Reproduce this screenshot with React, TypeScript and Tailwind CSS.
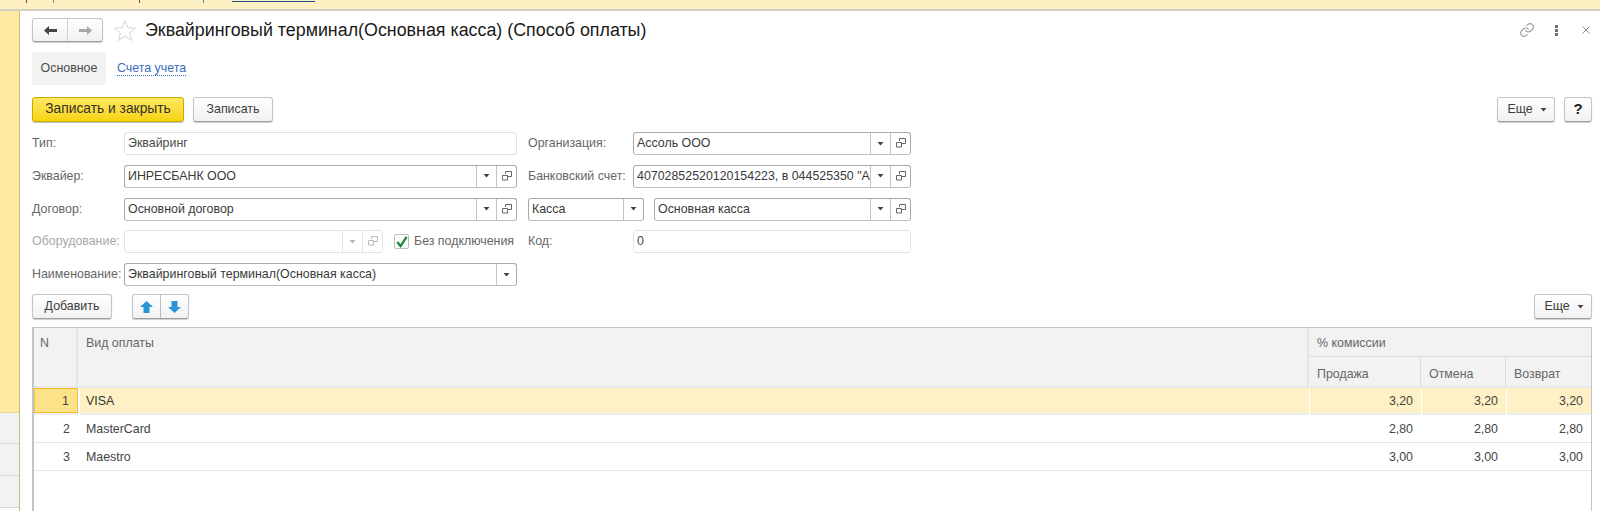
import React from 'react';

const Caret = ({ light = false }: { light?: boolean }) => (
  <svg width="7" height="4" viewBox="0 0 7 4" className="block">
    <path d="M0.5 0H6.5L3.5 3.5Z" fill={light ? '#b5b5b5' : '#444444'} />
  </svg>
);

const OpenIcon = ({ light = false }: { light?: boolean }) => (
  <svg width="10" height="10" viewBox="0 0 10 10" className="block -mt-px" fill="none" stroke={light ? '#b8b8b8' : '#666666'} strokeWidth="1">
    <path d="M3.5 3V0.5H9.5V5.5H6" />
    <path d="M0.5 4.5H5.5V9H0.5Z" />
  </svg>
);

const Btn = ({ children, className = '' }: { children: React.ReactNode; className?: string }) => (
  <div className={`h-6 flex items-center justify-center rounded-[3px] border border-[#c4c4c4] border-b-[#9f9f9f] bg-gradient-to-b from-white to-[#f1f1f1] shadow-[0_1px_1px_rgba(0,0,0,0.2)] text-[12.4px] text-[#3c3c3c] ${className}`}>
    {children}
  </div>
);

const Field = ({
  text = '',
  className = '',
  caret = false,
  open = false,
  disabled = false,
}: {
  text?: string;
  className?: string;
  caret?: boolean;
  open?: boolean;
  disabled?: boolean;
}) => (
  <div
    className={`h-[23px] flex items-stretch rounded-[3px] border text-[12.4px] ${
      disabled || !(caret || open)
        ? 'border-[#e2e2e2] text-[#4a4a4a]'
        : 'border-[#a9a9a9] border-b-[#bdbdbd] text-[#3a3a3a]'
    } ${className}`}
  >
    <div className="flex-1 min-w-0 pl-[3px] leading-[21px] whitespace-nowrap overflow-hidden">{text}</div>
    {caret && (
      <div className={`w-5 flex items-center justify-center border-l ${disabled ? 'border-[#e2e2e2]' : 'border-[#c4c4c4]'}`}>
        <Caret light={disabled} />
      </div>
    )}
    {open && (
      <div className={`w-5 flex items-center justify-center border-l ${disabled ? 'border-[#e2e2e2]' : 'border-[#c4c4c4]'}`}>
        <OpenIcon light={disabled} />
      </div>
    )}
  </div>
);

const Label = ({ children, className = '' }: { children: React.ReactNode; className?: string }) => (
  <div className={`text-[12.4px] leading-[23px] text-[#666666] whitespace-nowrap ${className}`}>{children}</div>
);

const rows = [
  { n: '1', name: 'VISA', sale: '3,20', cancel: '3,20', ret: '3,20' },
  { n: '2', name: 'MasterCard', sale: '2,80', cancel: '2,80', ret: '2,80' },
  { n: '3', name: 'Maestro', sale: '3,00', cancel: '3,00', ret: '3,00' },
];

const App: React.FC = () => {
  return (
    <div className="w-[1600px] h-[511px] overflow-hidden bg-white flex flex-col font-['Liberation_Sans',Arial,sans-serif]">
      {/* top strip */}
      <div className="h-[11px] shrink-0 bg-[#fdf0c3] border-b-2 border-[#d2cfc4] flex items-start">
        <span className="ml-[26px] w-px h-[3px] bg-[#8c3a3a]" />
        <span className="ml-[26px] w-px h-[3px] bg-[#6f8fa8]" />
        <span className="ml-[85px] w-px h-[3px] bg-[#8c3a3a]" />
        <span className="ml-[63px] w-px h-[3px] bg-[#3d8fb0]" />
        <span className="ml-[28px] w-[83px] h-px mt-px bg-[#1d4f8c]" />
      </div>

      <div className="flex flex-1 min-h-0">
        {/* left panel */}
        <div className="w-5 shrink-0 border-r border-[#c9bd7a] flex flex-col">
          <div className="h-[402px] bg-[#fdeaa0] border-b border-[#e6d98f]" />
          <div className="h-[31px] bg-[#f2f2f2] border-b border-[#d6d6d6]" />
          <div className="h-[32px] bg-[#f2f2f2] border-b border-[#d6d6d6]" />
          <div className="h-[32px] bg-[#f2f2f2] border-b border-[#d6d6d6]" />
        </div>

        <div className="flex-1 min-w-0 pl-3 pr-2 flex flex-col">
          {/* title row */}
          <div className="mt-[7px] h-6 flex items-center">
            <div className="w-[71px] h-6 flex rounded-[3px] border border-[#c4c4c4] border-b-[#9f9f9f] bg-gradient-to-b from-white to-[#f1f1f1] shadow-[0_1px_1px_rgba(0,0,0,0.2)]">
              <div className="w-[35px] flex items-center justify-center border-r border-[#d0d0d0]">
                <svg width="13" height="9" viewBox="0 0 13 9"><path d="M0 4.5L5 0V3H13V6H5V9Z" fill="#444444" /></svg>
              </div>
              <div className="flex-1 flex items-center justify-center">
                <svg width="13" height="9" viewBox="0 0 13 9"><path d="M13 4.5L8 0V3H0V6H8V9Z" fill="#a8a8a8" /></svg>
              </div>
            </div>
            <svg width="24" height="23" viewBox="0 0 24 23" className="ml-[10px]">
              <path d="M12 1.5L14.8 8.8L22.5 9.2L16.5 14L18.6 21.5L12 17.2L5.4 21.5L7.5 14L1.5 9.2L9.2 8.8Z" fill="#ffffff" stroke="#d4d4d4" strokeWidth="1" />
            </svg>
            <div className="ml-2 text-[17.85px] leading-6 text-[#1a1a1a] whitespace-nowrap">
              Эквайринговый терминал(Основная касса) (Способ оплаты)
            </div>
            <div className="ml-auto flex items-center pr-[5px]">
              <svg width="16" height="16" viewBox="0 0 24 24" fill="none" stroke="#9a9a9a" strokeWidth="1.7" strokeLinecap="round">
                <path d="M10 13a5 5 0 0 0 7.5.5l3-3a5 5 0 0 0-7-7l-1.7 1.7" />
                <path d="M14 11a5 5 0 0 0-7.5-.5l-3 3a5 5 0 0 0 7 7l1.7-1.7" />
              </svg>
              <div className="ml-[20px] flex flex-col gap-[1px]">
                <span className="w-[3px] h-[3px] bg-[#707070]" />
                <span className="w-[3px] h-[3px] bg-[#707070]" />
                <span className="w-[3px] h-[3px] bg-[#707070]" />
              </div>
              <svg width="8" height="8" viewBox="0 0 8 8" className="ml-[24px] mr-[-3px]" stroke="#8f8f8f" strokeWidth="1">
                <path d="M0.5 0.5L7.5 7.5M7.5 0.5L0.5 7.5" />
              </svg>
            </div>
          </div>

          {/* tabs */}
          <div className="mt-[10px] flex items-center text-[12.4px]">
            <div className="w-[74px] h-[33px] bg-[#f2f2f2] rounded-[3px] flex items-center justify-center text-[#4a4a4a]">Основное</div>
            <div className="ml-[11px] text-[#3a6cbd] border-b border-dotted border-[#3a6cbd] leading-[14px]">Счета учета</div>
          </div>

          {/* command bar */}
          <div className="mt-[12px] flex items-center">
            <div className="w-[152px] h-[25px] flex items-center justify-center rounded-[3px] border border-[#c9a900] bg-gradient-to-b from-[#ffe95c] to-[#f7d300] shadow-[0_1px_1px_rgba(0,0,0,0.25)] text-[13.8px] text-[#33322a]">
              Записать и закрыть
            </div>
            <Btn className="ml-[9px] w-20 h-[25px]">Записать</Btn>
            <Btn className="ml-auto w-[58px] h-[25px] gap-[7px] pl-[2px]">
              Еще <Caret />
            </Btn>
            <Btn className="ml-[9px] w-7 h-[25px] !text-[15px] !text-[#222222] font-bold">?</Btn>
          </div>

          {/* form */}
          <div className="mt-[10px] flex">
            <div className="w-[485px] flex flex-col gap-[9.8px]">
              <div className="flex">
                <Label className="w-[92px]">Тип:</Label>
                <Field text="Эквайринг" className="w-[393px]" />
              </div>
              <div className="flex">
                <Label className="w-[92px]">Эквайер:</Label>
                <Field text="ИНРЕСБАНК ООО" className="w-[393px]" caret open />
              </div>
              <div className="flex">
                <Label className="w-[92px]">Договор:</Label>
                <Field text="Основной договор" className="w-[393px]" caret open />
              </div>
              <div className="flex">
                <Label className="w-[92px] !text-[#a8a8a8]">Оборудование:</Label>
                <Field className="w-[259px]" caret open disabled />
                <div className="ml-[11px] w-[15px] h-[15px] mt-1 rounded-[2px] border border-[#c0c0c0] bg-white flex items-center justify-center">
                  <svg width="14" height="14" viewBox="0 0 14 14" fill="none">
                    <path d="M2.5 7L6 11.5L12.5 1.5" stroke="#12893c" strokeWidth="2.4" />
                  </svg>
                </div>
                <Label className="ml-[5px]">Без подключения</Label>
              </div>
              <div className="flex">
                <Label className="w-[92px]">Наименование:</Label>
                <Field text="Эквайринговый терминал(Основная касса)" className="w-[393px]" caret />
              </div>
            </div>

            <div className="ml-[11px] w-[383px] flex flex-col gap-[9.8px]">
              <div className="flex">
                <Label className="w-[105px]">Организация:</Label>
                <Field text="Ассоль ООО" className="w-[278px]" caret open />
              </div>
              <div className="flex">
                <Label className="w-[105px]">Банковский счет:</Label>
                <Field text={'40702852520120154223, в 044525350 "АКБ'} className="w-[278px]" caret open />
              </div>
              <div className="flex">
                <Field text="Касса" className="w-[116px]" caret />
                <Field text="Основная касса" className="ml-[10px] w-[257px]" caret open />
              </div>
              <div className="flex">
                <Label className="w-[105px]">Код:</Label>
                <Field text="0" className="w-[278px]" />
              </div>
            </div>
          </div>

          {/* table bar */}
          <div className="mt-2 flex items-center">
            <Btn className="w-20 h-[25px]">Добавить</Btn>
            <div className="ml-5 w-[57px] h-[25px] flex rounded-[3px] border border-[#c4c4c4] border-b-[#9f9f9f] bg-gradient-to-b from-white to-[#f1f1f1] shadow-[0_1px_1px_rgba(0,0,0,0.2)]">
              <div className="w-7 flex items-center justify-center border-r border-[#bdbdbd]">
                <svg width="13" height="12" viewBox="0 0 13 12"><path d="M6.5 0L13 6H9.5V12H3.5V6H0Z" fill="#2b95d6" /></svg>
              </div>
              <div className="flex-1 flex items-center justify-center">
                <svg width="13" height="12" viewBox="0 0 13 12"><path d="M6.5 12L13 6H9.5V0H3.5V6H0Z" fill="#2b95d6" /></svg>
              </div>
            </div>
            <Btn className="ml-auto w-[58px] h-[25px] gap-[7px] pl-[2px]">
              Еще <Caret />
            </Btn>
          </div>

          {/* table */}
          <div className="mt-2 flex-1 border-l-2 border-t border-r border-[#c4c4c4] text-[12.4px]">
            <div className="grid grid-cols-[44px_1231px_1fr] h-[60px] bg-[#f2f2f2] text-[#666666] border-b-2 border-[#e8e8e8]">
              <div className="pl-[6px] pt-[6px] border-r-2 border-[#e4e4e4]">N</div>
              <div className="pl-2 pt-[6px] border-r-2 border-[#e4e4e4]">Вид оплаты</div>
              <div className="flex flex-col">
                <div className="h-[29px] pl-2 pt-[6px] border-b border-[#dcdcdc]">% комиссии</div>
                <div className="flex flex-1">
                  <div className="w-[112px] pl-2 pt-2 border-r border-[#dcdcdc]">Продажа</div>
                  <div className="w-[85px] pl-2 pt-2 border-r border-[#dcdcdc]">Отмена</div>
                  <div className="flex-1 pl-2 pt-2">Возврат</div>
                </div>
              </div>
            </div>
            {rows.map((row, i) => (
              <div
                key={row.n}
                className={`grid grid-cols-[44px_1231px_112px_85px_1fr] text-[#444444] ${
                  i === 0 ? 'h-[27px] bg-[#fdf1c5] border-b-2 border-[#eeeeee]' : 'h-[28px] border-b border-[#e4e4e4]'
                }`}
              >
                <div className={`pr-[8px] text-right ${i === 0 ? 'leading-[25px] h-[25px] bg-[#fde28a] border border-[#f4bd2a]' : 'leading-[29px]'}`}>{row.n}</div>
                <div className={`${i === 0 ? 'pl-[6px] leading-[27px] border-l-2 border-white text-[#333333]' : 'pl-2 leading-[29px]'}`}>{row.name}</div>
                <div className={`pr-2 text-right ${i === 0 ? 'leading-[27px] border-l border-white' : 'leading-[29px]'}`}>{row.sale}</div>
                <div className={`pr-2 text-right ${i === 0 ? 'leading-[27px] border-l border-white' : 'leading-[29px]'}`}>{row.cancel}</div>
                <div className={`pr-2 text-right ${i === 0 ? 'leading-[27px] border-l border-white' : 'leading-[29px]'}`}>{row.ret}</div>
              </div>
            ))}
          </div>
        </div>
      </div>
    </div>
  );
};

export default App;
